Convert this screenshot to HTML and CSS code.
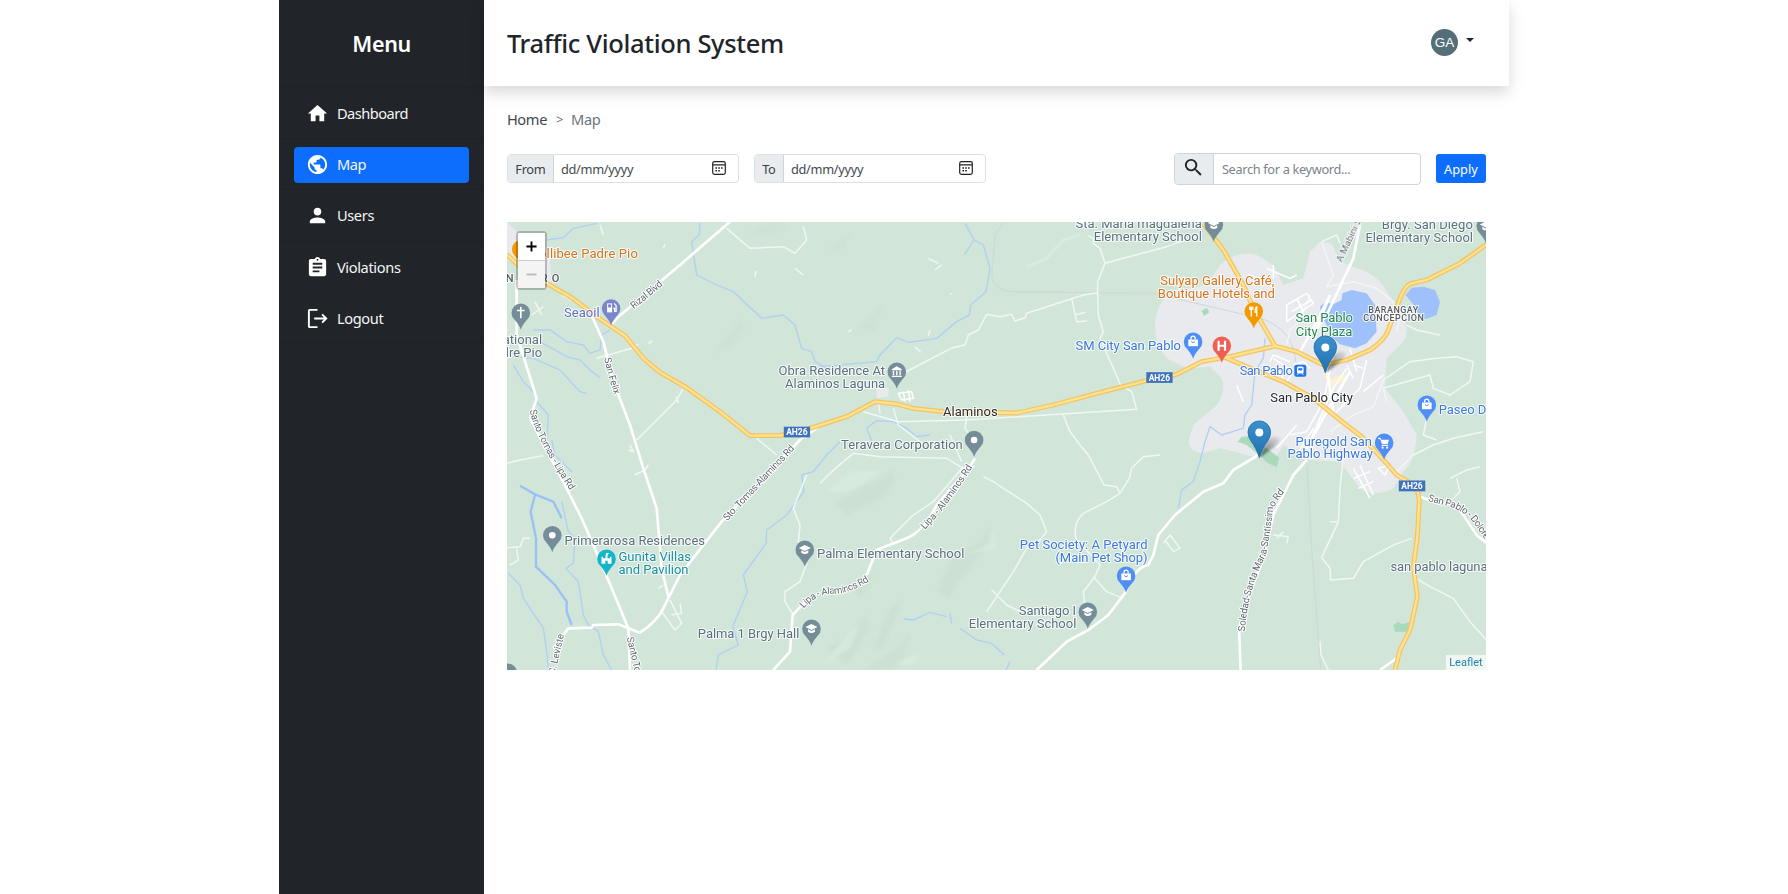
FILE: index.html
```html
<!DOCTYPE html>
<html lang="en">
<head>
<meta charset="utf-8">
<title>Traffic Violation System</title>
<link rel="stylesheet" href="styles.css">
</head>
<body>
<div class="app">
  <aside class="sidebar">
    <h2 class="menu-title">Menu</h2>
    <nav>
      <div class="nav-row"><a class="nav-link"><svg viewBox="0 0 24 24"><path d="M10 20v-6h4v6h5v-8h3L12 3 2 12h3v8z"/></svg><span class="t-dash">Dashboard</span></a></div>
      <div class="nav-row"><a class="nav-link active"><svg viewBox="0 0 24 24"><path d="M12 2C6.480 2 2 6.480 2 12s4.480 10 10 10 10-4.480 10-10S17.520 2 12 2zm-1 17.930c-3.950-.49-7-3.850-7-7.930 0-.62.080-1.210.21-1.790L9 15v1c0 1.100.9 2 2 2v1.930zm6.900-2.540c-.26-.81-1-1.390-1.900-1.390h-1v-3c0-.55-.45-1-1-1H8v-2h2c.55 0 1-.45 1-1V7h2c1.100 0 2-.9 2-2v-.41c2.930 1.190 5 4.060 5 7.410 0 2.080-.8 3.970-2.100 5.390z"/></svg><span>Map</span></a></div>
      <div class="nav-row"><a class="nav-link"><svg viewBox="0 0 24 24"><path d="M12 12c2.210 0 4-1.790 4-4s-1.790-4-4-4-4 1.790-4 4 1.790 4 4 4zm0 2c-2.670 0-8 1.340-8 4v2h16v-2c0-2.660-5.330-4-8-4z"/></svg><span>Users</span></a></div>
      <div class="nav-row"><a class="nav-link"><svg viewBox="0 0 24 24"><path d="M19 3h-4.180C14.400 1.840 13.300 1 12 1s-2.400.84-2.820 2H5c-1.100 0-2 .9-2 2v14c0 1.100.9 2 2 2h14c1.100 0 2-.9 2-2V5c0-1.100-.9-2-2-2zm-7 0c.55 0 1 .45 1 1s-.45 1-1 1-1-.45-1-1 .45-1 1-1zm2 14H7v-2h7v2zm3-4H7v-2h10v2zm0-4H7V7h10v2z"/></svg><span>Violations</span></a></div>
      <div class="nav-row"><a class="nav-link"><svg viewBox="0 0 24 24"><path d="M17.500 7l-1.400 1.400L18.700 11H8.500v2h10.200l-2.600 2.600L17.500 17l5-5zM4 4h8V2H4c-1.100 0-2 .9-2 2v16c0 1.100.9 2 2 2h8v-2H4z"/></svg><span>Logout</span></a></div>
    </nav>
  </aside>
  <main class="content">
    <header class="topbar">
      <h1 class="title">Traffic Violation System</h1>
      <div class="account"><span class="avatar">GA</span><span class="caret"></span></div>
    </header>
    <section class="page">
      <div class="crumbs"><a>Home</a><span class="sep">&gt;</span><span class="current">Map</span></div>
      <div class="filters">
        <div class="group"><span class="addon from">From</span><span class="field"><span>dd/mm/yyyy</span><svg class="cal" viewBox="0 0 14 14"><rect x=".7" y=".7" width="12.600" height="12.600" rx="1.800"/><path d="M1 3.800h12"/><path class="dots" d="M3.400 7h1.600M6.200 7h1.600M9 7h1.600M3.400 9.800h1.600M6.200 9.800h1.600"/></svg></span></div>
        <div class="group"><span class="addon to">To</span><span class="field"><span>dd/mm/yyyy</span><svg class="cal" viewBox="0 0 14 14"><rect x=".7" y=".7" width="12.600" height="12.600" rx="1.800"/><path d="M1 3.800h12"/><path class="dots" d="M3.400 7h1.600M6.200 7h1.600M9 7h1.600M3.400 9.800h1.600M6.200 9.800h1.600"/></svg></span></div>
        <div class="group search"><span class="addon lens"><svg viewBox="0 0 24 24"><path d="M15.500 14h-.79l-.28-.27A6.471 6.471 0 0 0 16 9.500 6.500 6.500 0 1 0 9.500 16c1.610 0 3.090-.59 4.230-1.570l.27.28v.79l5 4.990L20.490 19l-4.990-5zm-6 0C7.010 14 5 11.990 5 9.500S7.010 5 9.500 5 14 7.010 14 9.500 11.990 14 9.500 14z"/></svg></span><span class="field hint">Search for a keyword...</span></div>
        <button class="apply">Apply</button>
      </div>
      <div class="map">
        <svg class="canvas" viewBox="21 21 2937 1344" preserveAspectRatio="none">
          <defs>
            <linearGradient id="mk" x1="0" y1="0" x2="0" y2="1"><stop offset="0" stop-color="#3a92cf"/><stop offset="1" stop-color="#236fae"/></linearGradient>
            <linearGradient id="sh" x1="0" y1="1" x2=".7" y2="0"><stop offset="0" stop-color="#000" stop-opacity=".6"/><stop offset="1" stop-color="#000" stop-opacity=".08"/></linearGradient>
            <filter id="soft" x="-30%" y="-30%" width="160%" height="160%"><feGaussianBlur stdDeviation="1.300"/></filter>
            <filter id="haze" x="-30%" y="-30%" width="160%" height="160%"><feGaussianBlur stdDeviation="5"/></filter>
            <path id="pin" d="M0 0C-1.200-3.600-3-6.500-6.400-10.200A9.300 9.300 0 1 1 6.400-10.200C3-6.500 1.200-3.600 0 0z"/>
            <g id="cap"><path d="M0-21.800l6 3-6 3-6-3z"/><path d="M-3.500-16.500v2.500q3.500 2.500 7 0v-2.500L0-14.800z"/></g>
            <g id="bag"><path d="M-4.800-19.200h9.600v6.700h-9.600z"/><path class="ln" d="M-2.100-19.200v-1.300a2.100 2.100 0 0 1 4.200 0v1.300"/><path d="M-1.900-17.200q1.900 2.600 3.800 0" fill="none" stroke="#4f8ef7"/></g>
            <g id="marker"><path filter="url(#soft)" d="M0 0L8-17Q16-25 21-19Q20-13 0 0z" fill="url(#sh)"/><path d="M0 0C-2-7-5-12-8.500-17Q-11.300-21-11.300-25.500A11.300 11.300 0 0 1 11.300-25.500Q11.300-21 8.500-17C5-12 2-7 0 0z" fill="url(#mk)" stroke="#2269a5" stroke-width=".8"/><circle cy="-25.300" r="4" fill="#fff"/></g>
            <path id="felix" d="M604.500 358.500Q609 380 615 396"/>
            <path id="lipa" d="M530 411Q535 437 571 492"/>
            <path id="sol" d="M1245 632Q1248 590 1266 556Q1271 530 1273 511Q1277 499 1290 487"/>
            <path id="low" d="M804 609Q816 594 834 594Q850 594 870 581"/>
            <path id="dol" d="M1428 501L1453 508Q1468 514 1475 525L1494 552"/>
            <path id="upl" d="M925 530Q948 507 974 465"/>
          </defs>
          <rect x="21" y="21" width="2937" height="1344" fill="#d1e6d9"/>
          <!-- hill shading -->
          <g fill="#c7dccf" opacity=".45" filter="url(#haze)">
            <path d="M1010 860L1090 815 1150 790 1170 765 1185 790 1150 850 1080 880 1040 900zM1060 1120L1120 1070 1110 1110 1080 1150zM1310 1130L1360 1020 1440 980 1470 930 1465 970 1420 1050 1370 1100 1350 1150zM980 1300L1050 1260 1100 1200 1110 1240 1040 1350zM1120 1300L1170 1180 1210 1150 1150 1300zM1090 1365L1200 1290 1230 1250 1210 1330 1180 1365z"/>
            <path d="M645 410L690 350 725 310 735 345 680 400zM750 50L820 20 870 40 800 60zM990 100L1050 55 1030 100zM1080 340L1150 270 1120 350z" opacity=".6"/>
          </g>
          <g fill="#daecdf" opacity=".7" filter="url(#haze)"><path d="M980 830L1050 770 1150 765 1100 800 1040 830zM970 1350L1040 1260 1080 1230 1050 1300zM1180 1350L1260 1310 1240 1350zM1390 1020L1470 990 1480 940 1490 1000z"/></g>
          <path d="M1580 155L1640 130 1690 75 1740 60" fill="none" stroke="#d9ebe0" stroke-width="10"/>
          <!-- built-up areas -->
          <g fill="#e8eaee">
            <path d="M21 21L60 60 90 120 150 130 155 200 80 180 21 130z"/>
            <path transform="translate(1920)" d="M45 330Q50 250 110 225L200 210 240 150Q290 105 350 120L400 150 430 210 490 190 510 110 540 80 575 85 600 140 680 170Q730 200 740 230L790 300Q810 350 790 380L740 430 735 520 790 590 830 660Q825 740 790 770L760 820Q700 850 660 820L600 740 500 735 430 690 400 740 240 700 185 715Q150 710 145 680L160 630 230 570Q260 530 245 490L210 455 140 460 80 430Q45 390 45 330z"/>
            <path d="M1130 520L1165 518 1165 545 1130 550z"/>
          </g>
          <g fill="#9fc1fb">
            <path transform="translate(1920)" d="M540 275L555 262 580 268 605 255 607 235 635 225 680 235 705 270 710 350 680 385 645 400 600 388 575 365 560 330 545 305z"/>
            <path transform="translate(1920)" d="M797 240L815 218 850 215 885 225 900 260 890 300 855 313 835 300 825 275z"/>
          </g>
          <g fill="#a8dabb"><path d="M2105 288L2120 278 2128 292 2112 303zM2213 680L2225 665 2245 664 2268 680 2300 700 2338 728 2330 757 2300 742 2280 722 2240 690zM2680 1230L2695 1220 2705 1228 2728 1222 2722 1250 2685 1250z"/></g>
          <path d="M2468 480L2480 468 2505 510 2500 520zM2480 500L2530 475 2545 492 2500 512z" fill="#fbf0cf"/>
          <g class="river">
            <path d="M140 75L190 68 220 40 290 25M600 25L598 60 575 80 590 180 650 210 700 230 785 310 850 300 885 330 905 400 935 410 945 440 980 460"/>
            <path d="M1395 25L1423 75 1450 90 1470 160 1458 230 1412 270 1408 300 1370 320 1310 370 1225 382 1190 368 1140 420 1130 440 960 455M1422 75L1394 118"/>
            <path d="M100 345L150 345 200 380 250 390 270 415 300 405 305 360 330 345M40 425L100 430 180 465 240 530 260 535M120 380L200 425 240 435 270 465 300 488"/>
            <path d="M40 450L70 500 110 540 110 560 145 600 140 690M155 675L165 720 215 770"/>
            <path d="M1120 690L1100 640 1130 617 1180 620 1220 640 1250 665 1290 660M1020 680L980 720 940 770 905 780 912 830 860 900 800 945 798 985 730 1080 742 1130 698 1235 715 1290 655 1320 648 1365"/>
            <path d="M185 860L205 950 225 970 220 1045 198 1060 235 1100 250 1200 265 1230 295 1250 310 1320 335 1365M25 1075L60 1110 70 1150 130 1240 140 1310 145 1365M2295 370L2290 430 2265 470 2255 570 2235 600 2230 640 2165 660 2130 635 2115 680 2100 740 2080 800 2045 825 2035 880"/>
            <path class="wide" d="M60 812L105 838 160 860 185 910M105 840L92 890 108 970 108 1055 165 1110 200 1160 200 1190 215 1230"/>
            <path d="M1212 1212L1240 1215 1290 1192 1340 1205M1350 1195L1355 1225M1380 1240L1430 1275 1475 1285 1513 1320M1530 1340L1518 1365"/>
          </g>
          <path d="M1510 20L1485 60 1475 190Q1490 230 1540 230L1960 235 2230 298Q2380 320 2387 440M2420 735L2435 1000 2462 1360" fill="none" stroke="#d0d6d6" stroke-width="3"/>
          <!-- lanes -->
          <g class="lane">
            <path d="M680 40L750 100 850 95 885 115 920 75 910 35M300 30L310 60M490 100L495 88M765 185L768 168M95 300L130 275M105 260L125 300M185 240L215 255M290 430L395 400 415 388M410 675L530 555 548 523M528 545L535 565M210 245L240 260M445 385L458 378M885 160L910 180"/>
            <path d="M1200 480L1353 400 1395 390 1405 360 1435 345 1460 298 1500 305 1535 298 1545 318 1575 308 1580 295 1750 240 1793 233M1793 233L1793 200 1815 145 1800 100 1780 85 1780 70 1765 62M1815 145L1870 130 2000 95 2100 60M1715 250L1730 320 1762 318M1725 300L1757 292M1793 235L1795 300 1810 350 1800 370 1862 510 1895 530 1910 583 1400 615 1195 620 1090 590M1245 395L1262 412M1285 130L1315 145M1305 165L1325 150M1350 238L1355 235M1290 345L1285 362M1045 350L1055 345"/>
            <path d="M1135 560L1140 595M1180 580L1195 630 1260 680 1270 690M1400 600L1395 640 1410 660M1690 600L1710 650 1740 690 1765 720 1812 810 1850 815 1860 835 1888 790 1895 760 1930 725 1980 720M1860 835L1820 860 1750 895Q1715 930 1730 975L1800 1050 1785 1085 1750 1130 1755 1180"/>
            <path d="M20 745L60 735 130 722M390 690L400 710 385 705M404 780L435 765 445 750M20 998L60 995 70 970 90 970M50 1000L55 1035 30 1050M475 1120L490 1110M510 1155L545 1225 525 1245 485 1190M540 1165L545 1195 515 1200"/>
            <path d="M960 805L990 775 1030 740 1060 715 1140 725 1340 730 1390 760 1425 755M1390 755L1300 860 1240 900 1170 970 1180 985M1450 785L1480 800 1510 820 1580 865 1620 900 1640 950 1620 975 1580 1000 1540 1070 1460 1190M1475 1125L1520 1170 1560 1190M1350 660L1385 740M1780 1085L1820 1130 1870 1150M920 780L880 880 900 930 895 980 918 1050 900 1100 855 1130 855 1160 880 1200M770 670L830 720"/>
            <path d="M2465 80L2500 180 2480 215 2560 200 2630 220 2680 260 2700 310 2690 350M2465 80L2510 60 2520 85M2720 330L2750 345 2820 360M2360 390L2370 345 2400 315 2430 240M2490 650L2560 600 2620 575 2650 495 2730 440 2810 430 2870 425 2920 440 2910 500 2850 540 2800 520 2790 480 2650 520 2660 560M2780 610L2770 660 2810 675M2530 725L2520 820 2515 920 2465 1028 2490 1060 2492 1095 2560 1090 2590 1040 2680 990 2735 970M2850 790L2900 765 2940 755M2870 790L2880 830 2850 860M2740 1085L2790 1115 2860 1150 2910 1220 2960 1275M2460 1278L2463 1320 2485 1365M2490 920L2510 920M1990 985L2010 960 2040 1000 2020 1010 1995 975M2320 960L2365 965 2360 985M2350 950L2330 970M2690 770L2740 720 2800 690 2860 670 2950 650"/>
          </g>
          <g class="lane block">
            <path d="M2360 270L2420 235 2440 265 2360 320zM2375 290L2435 255M2390 250L2410 290M2300 160L2370 190 2390 180M2320 150L2320 190M2245 180L2280 190"/>
            <path d="M2500 420L2470 560 2420 650 2370 660M2540 460L2500 520 2420 700M2600 435L2580 520 2500 600M2320 430L2380 470 2360 500M2330 460L2350 490M2210 510L2230 560M2390 630L2330 700M2440 640L2390 720M2590 530L2650 480M2550 400L2570 470M2310 440L2320 420 2370 440M2300 470L2360 500M2540 450L2560 490M2560 450L2590 460"/>
            <path d="M2560 760L2610 850M2580 750L2620 840M2560 790L2610 770M2575 820L2620 800M2635 760L2670 750 2655 780zM2430 460L2410 440 2380 450M1195 535L1235 530 1240 550 1205 555zM1210 530L1215 560M1225 525L1230 560"/>
          </g>
          <!-- connecting roads -->
          <g class="road">
            <path d="M690 20L540 150 350 310 334 330M270 290L310 380 340 500 390 630 430 760 470 880 485 1060 505 1145M50 195L50 360 110 550 90 610 200 820 245 910 310 1060 385 1240 390 1365M160 1300L205 1240 275 1238 280 1230 355 1228 420 1253Q470 1220 490 1180L540 1080 665 920 900 675 970 625"/>
            <path d="M820 1365L870 1310 878 1200 925 1150M1100 1080L1130 1005 1220 970Q1270 950 1310 870L1410 755 1425 730M1610 1365L1700 1280 1765 1245 1825 1200 1878 1130Q1900 1060 1945 1050L1960 1020 1975 960 2025 900 2110 830 2170 805 2200 765 2275 720M2420 735L2380 780 2320 900 2290 1030 2240 1160 2217 1240 2222 1365M2640 1365L2690 1330M2490 240L2450 340 2480 300 2560 130 2580 30M2490 240L2440 340 2400 410M2760 845L2800 860 2870 870 2930 960 2960 985"/>
            <path d="M2480 460L2500 590M2550 470L2480 590 2420 700"/>
          </g>
          <g class="hwy">
            <path d="M2110 25L2170 105 2230 210 2260 280 2325 393M2170 425L2240 455 2350 500 2440 550 2520 615 2585 665 2655 740 2690 780 2750 815 2758 855 2752 965 2740 1055 2752 1145 2730 1245 2700 1305 2685 1365"/>
            <path d="M20 118L60 155 140 205 215 248 300 312 375 362 430 430 480 472 560 518 660 590 750 662 840 662 930 640 1040 605 1125 560 1190 567 1240 580 1330 590 1550 594 1660 570 1810 530 1940 497 2030 478 2105 440 2190 425 2325 393 2390 410 2470 450 2540 435 2610 405Q2655 375 2665 345L2700 250Q2715 210 2735 205L2780 195 2880 145 2960 88"/>
          </g>
          <g class="hwy-in">
            <path d="M2110 25L2170 105 2230 210 2260 280 2325 393M2170 425L2240 455 2350 500 2440 550 2520 615 2585 665 2655 740 2690 780 2750 815 2758 855 2752 965 2740 1055 2752 1145 2730 1245 2700 1305 2685 1365"/>
            <path d="M20 118L60 155 140 205 215 248 300 312 375 362 430 430 480 472 560 518 660 590 750 662 840 662 930 640 1040 605 1125 560 1190 567 1240 580 1330 590 1550 594 1660 570 1810 530 1940 497 2030 478 2105 440 2190 425 2325 393 2390 410 2470 450 2540 435 2610 405Q2655 375 2665 345L2700 250Q2715 210 2735 205L2780 195 2880 145 2960 88"/>
          </g>
          <!-- labels and places -->
          <g transform="scale(3) translate(-500.200 -215.300)">
            <g class="street">
              <text transform="translate(634 309.500) rotate(-39.500)" textLength="38">Rizal Blvd</text>
              <text><textPath href="#felix" textLength="38">San Felix</textPath></text>
              <text><textPath href="#lipa" textLength="90">Santo Tomas - Lipa Rd</textPath></text>
              <text transform="translate(727.500 521.500) rotate(-47)" textLength="99">Sto. Tomas-Alaminos Rd</text>
              <text><textPath href="#low" textLength="73">Lipa - Alaminos Rd</textPath></text>
              <text><textPath href="#upl" textLength="79">Lipa - Alaminos Rd</textPath></text>
              <text><textPath href="#sol" textLength="147">Soledad-Santa Maria-Santissimo Rd</textPath></text>
              <text><textPath href="#dol" textLength="77">San Pablo - Dolores</textPath></text>
              <text transform="translate(1342 263) rotate(-65)" textLength="50">A Mabini St</text>
              <text transform="translate(627 638) rotate(77)" textLength="54">Santo Tomas</text>
              <text transform="translate(555 675) rotate(-77)" textLength="41">C. Leviste</text>
            </g>
            <g class="lbl">
              <g fill="#d4731b">
                <text x="532" y="258.700" textLength="106">Jollibee Padre Pio</text>
                <text x="1160.500" y="285.300" textLength="114">Sulyap Gallery Café,</text>
                <text x="1158" y="298.300" textLength="117">Boutique Hotels and</text>
              </g>
              <g fill="#5f6bc4"><text x="564.300" y="317.700" textLength="35.500">Seaoil</text></g>
              <g fill="#5b6f7c">
                <text x="542.300" y="344.300" text-anchor="end">National</text><text x="542.300" y="357.300" text-anchor="end">Padre Pio</text>
                <text x="778.700" y="375" textLength="106.600">Obra Residence At</text><text x="785.300" y="388" textLength="100">Alaminos Laguna</text>
                <text x="841.300" y="449" textLength="121.700">Teravera Corporation</text>
                <text x="1075.700" y="228" textLength="126.300">Sta. Maria magdalena</text><text x="1094" y="241" textLength="108">Elementary School</text>
                <text x="1382" y="229.500" textLength="91">Brgy. San Diego</text><text x="1365.700" y="242.500" textLength="107.500">Elementary School</text>
                <text x="564.700" y="545" textLength="140.500">Primerarosa Residences</text>
                <text x="817.300" y="558.700" textLength="147.200">Palma Elementary School</text>
                <text x="698" y="638" textLength="101.500">Palma 1 Brgy Hall</text>
                <text x="1019" y="615" textLength="57.300">Santiago I</text><text x="969" y="628" textLength="107.500">Elementary School</text>
                <text x="1390.700" y="571" textLength="97">san pablo laguna</text>
              </g>
              <g fill="#168f9e"><text x="618.700" y="561.300" textLength="72.500">Gunita Villas</text><text x="618.700" y="574.300" textLength="70">and Pavilion</text></g>
              <g fill="#3b78d8">
                <text x="1075.700" y="350.500" textLength="105.500">SM City San Pablo</text><text x="1240" y="375.700" textLength="53">San Pablo</text>
                <text x="1439" y="414" textLength="47.500">Paseo D</text>
                <text x="1295.700" y="446" textLength="76.500">Puregold San</text><text x="1287.700" y="458.700" textLength="85.500">Pablo Highway</text>
                <text x="1020" y="549.300" textLength="127.700">Pet Society: A Petyard</text><text x="1055.700" y="562.300" textLength="92">(Main Pet Shop)</text>
              </g>
              <g fill="#25874f"><text x="1295.700" y="322.700" textLength="57.500">San Pablo</text><text x="1296" y="336" textLength="56.500">City Plaza</text></g>
              <g fill="#27292c"><text x="943.300" y="416.700" textLength="54.500">Alaminos</text><text x="1270.500" y="402.700" textLength="82.500">San Pablo City</text></g>
              <g class="area"><text class="town" x="506" y="282">N</text><text class="town" x="541" y="282" textLength="18.500">RO</text><text x="1368.500" y="313.500" textLength="50">BARANGAY</text><text x="1363.500" y="321.700" textLength="60.500">CONCEPCION</text></g>
            </g>
            <g class="shield">
              <rect x="784" y="427" width="26.300" height="10.700"/><text x="797.100" y="435.400">AH26</text>
              <rect x="1146.500" y="372.500" width="26.300" height="10.700"/><text x="1159.600" y="380.900">AH26</text>
              <rect x="1399" y="480.800" width="26.500" height="10.800"/><text x="1412.200" y="489.300">AH26</text>
            </g>
            <g class="pins">
              <g transform="translate(521 330)"><use href="#pin" fill="#758d98"/><path d="M-.8-23h1.600v3h3v1.500h-3v7h-1.600v-7h-3v-1.500h3z"/></g>
              <g transform="translate(521.500 266.500)"><use href="#pin" fill="#f29900"/></g>
              <g transform="translate(611.300 325.700)"><use href="#pin" fill="#7986cb"/><path d="M-4-22h5v9h-5z"/><path class="ln" d="M2-17h1.500v3h1.500v-6l-2-2"/><path d="M-3-21h3v3h-3z" fill="#7986cb"/></g>
              <g transform="translate(897 389)"><use href="#pin" fill="#758d98"/><path d="M0-22.500l5 3v1H-5v-1zM-5-13H5v1.200H-5zM-4-18h1.400v4.500H-4zM-.7-18H.7v4.500H-.7zM2.600-18H4v4.500H2.600z"/></g>
              <g transform="translate(974.300 457.300)"><use href="#pin" fill="#758d98"/><circle cy="-17" r="3.300"/></g>
              <g transform="translate(552.500 552.500)"><use href="#pin" fill="#758d98"/><circle cy="-17" r="3.300"/></g>
              <g transform="translate(508 690)"><use href="#pin" fill="#758d98"/></g>
              <g transform="translate(606.700 576)"><use href="#pin" fill="#12b5cb"/><path d="M-5-19h1.500v1.500H-1v-2.500L0-23l3 .8-2 1.200v3.500h2.500V-19H5v7H1.200v-3h-2.400v3H-5z"/></g>
              <g transform="translate(1214 242)"><use href="#pin" fill="#758d98"/><use href="#cap"/></g>
              <g transform="translate(1486 243.500)"><use href="#pin" fill="#758d98"/><use href="#cap"/></g>
              <g transform="translate(805 567)"><use href="#pin" fill="#758d98"/><use href="#cap"/></g>
              <g transform="translate(811.700 646)"><use href="#pin" fill="#758d98"/><use href="#cap"/></g>
              <g transform="translate(1088 629)"><use href="#pin" fill="#758d98"/><use href="#cap"/></g>
              <g transform="translate(1254 328.700)"><use href="#pin" fill="#f29900"/><path class="ln" d="M-4-22v3h3v-3M-2.500-22v10M3-12v-9.500q-2 1-1.500 5.500h1.500"/></g>
              <g transform="translate(1222 363)"><use href="#pin" fill="#ee6055"/><path d="M-4.300-22h2.200v4h4.200v-4h2.200v10H2.100v-4h-4.200v4h-2.200z"/></g>
              <g transform="translate(1193.300 359)"><use href="#pin" fill="#4f8ef7"/><use href="#bag"/></g>
              <g transform="translate(1427 422)"><use href="#pin" fill="#4f8ef7"/><use href="#bag"/></g>
              <g transform="translate(1126.300 593)"><use href="#pin" fill="#4f8ef7"/><use href="#bag"/></g>
              <g transform="translate(1384.300 460)"><use href="#pin" fill="#4f8ef7"/><path d="M-3.500-20H5l-1.600 4.500h-5.500zM-6-22h2.400l.8 2h-1.500l-.3-.8H-6zM-2.500-14.800h6.500v1.100h-6.500z"/><circle cx="-1.500" cy="-12" r="1.100"/><circle cx="3" cy="-12" r="1.100"/></g>
              <g><rect x="1294.500" y="365" width="12" height="12" rx="2" fill="#1f74e8"/><rect x="1297.200" y="366.800" width="6.600" height="7" rx="1.500"/><path d="M1298.500 368.500h4v2.200h-4z" fill="#1f74e8"/><path class="ln thin" d="M1298.700 373.300l-1.200 2M1302.300 373.300l1.200 2"/></g>
            </g>
            <use href="#marker" transform="translate(1325.500 373)"/>
            <use href="#marker" transform="translate(1259.500 458)"/>
          </g>
        </svg>
        <div class="zoom"><span class="zin"><svg viewBox="0 0 12 12"><path d="M6 .5v11M.5 6h11"/></svg></span><span class="zout"><svg viewBox="0 0 12 12"><path d="M.5 6h11"/></svg></span></div>
        <div class="attribution">Leaflet</div>
      </div>
    </section>
  </main>
</div>
</body>
</html>
```
FILE: styles.css
```css
* { box-sizing: border-box; }
body { margin: 0; background: #fff; color: #212529; font-family: "Noto Sans", "Open Sans", sans-serif; overflow: hidden; }
.app { display: flex; width: 1229.500px; height: 894px; margin-left: 279.400px; }
.sidebar { width: 204.500px; background: #212529; color: #fff; flex: none; }
.menu-title { margin: 0; height: 88px; display: flex; align-items: center; justify-content: center; font-size: 21.500px; font-weight: 600; letter-spacing: -.3px; border-bottom: 1px solid #1e2226; }
.nav-row { height: 51.200px; padding: 7.500px 15px; border-bottom: 1px solid #1e2226; }
.nav-link { height: 36px; display: flex; align-items: center; gap: 7.500px; padding-left: 12px; border-radius: 4px; font-size: 14.600px; letter-spacing: -.35px; color: #f4f5f6; }
.nav-link span { position: relative; top: -.5px; }
.nav-link .t-dash { letter-spacing: -.5px; }
.nav-link svg { width: 23px; height: 23px; fill: #fff; }
.active { background: #0d6efd; }
.content { flex: 1; display: flex; flex-direction: column; min-width: 0; }
.topbar { height: 85.700px; flex: none; display: flex; align-items: center; justify-content: space-between; padding: 0 35px 0 23px; box-shadow: 0 7.300px 14.600px rgba(0,0,0,.15); background: #fff; }
.title { margin: 0; font-size: 25.500px; font-weight: 500; white-space: nowrap; letter-spacing: -.34px; }
.account { display: flex; align-items: center; gap: 8px; }
.avatar { width: 27px; height: 27px; border-radius: 50%; background: #546e7a; color: #fff; display: grid; place-items: center; font: 13.500px "Liberation Sans", sans-serif; }
.caret { border: 4.400px solid transparent; border-top-color: #212529; border-bottom: 0; margin-bottom: 5px; }
.page { padding: 22.300px 23px 0; }
.crumbs { display: flex; align-items: center; height: 22px; font-size: 14.600px; letter-spacing: -.35px; color: #6c757d; }
.crumbs a { color: #40464c; }
.sep { margin: 0 8px 0 9px; font-size: 13px; }
.filters { display: flex; align-items: center; gap: 15px; height: 32px; margin-top: 22.700px; font-size: 12.800px; }
.group { width: 232px; height: 29px; display: flex; border: 1px solid #dbe0e5; border-radius: 4px; overflow: hidden; flex: none; }
.addon { display: grid; place-items: center; background: #e9ecef; border-right: 1px solid #ced4da; letter-spacing: -.3px; color: #3a4046; }
.from { width: 46px; }
.to { width: 29px; }
.field { flex: 1; display: flex; align-items: center; justify-content: space-between; padding: 0 12px 0 7px; letter-spacing: -.3px; color: #43494f; }
.cal { width: 14px; height: 14px; fill: none; stroke: #222; stroke-width: 1.200; margin-top: -1px; }
.cal .dots { stroke-width: 1.500; }
.search { width: 247px; height: 32px; margin-left: auto; border-color: #ced4da; }
.lens { width: 39px; }
.lens svg { width: 23px; height: 23px; fill: #212529; margin-top: -2px; }
.hint { color: #7b838a; padding-left: 8px; letter-spacing: -.35px; }
.apply { width: 50px; height: 29px; padding: 0; border: 0; border-radius: 3px; background: #0d6efd; color: #fff; font: 12.800px "Noto Sans", sans-serif; }
.map { position: relative; height: 448px; margin-top: 37px; overflow: hidden; }
.canvas { display: block; width: 100%; height: 100%; font-family: Roboto, sans-serif; }
.ln { fill: none; stroke: #fff; stroke-width: 1.300; }
.thin { stroke-width: .8; }
.river path { fill: none; stroke: #b0cff2; stroke-width: 4; }
.river .wide { stroke: #9ac1f6; stroke-width: 7; }
.lane path { fill: none; stroke: #f1f7f4; stroke-width: 4.500; stroke-linejoin: round; }
.block path { stroke: #fff; }
.road path { fill: none; stroke: #fff; stroke-width: 8; stroke-linejoin: round; }
.hwy path { fill: none; stroke: #f4c35e; stroke-width: 14.500; stroke-linejoin: round; }
.hwy-in path { fill: none; stroke: #fde293; stroke-width: 7; stroke-linejoin: round; }
.lbl text { font-size: 13px; stroke: #fff; stroke-opacity: .85; stroke-width: 2px; paint-order: stroke; stroke-linejoin: round; }
.lbl .area text { font-size: 9px; font-weight: 500; fill: #555b61; }
.lbl .area .town { font-size: 11px; }
.street text { font-size: 9.800px; fill: #5d666d; stroke: #fff; stroke-width: 2px; paint-order: stroke; stroke-linejoin: round; }
.shield rect { fill: #3f72bd; }
.shield text { fill: #fff; font-size: 8.500px; font-weight: 700; text-anchor: middle; }
.pins { fill: #fff; }
.zoom { position: absolute; left: 9.500px; top: 9.500px; width: 31px; height: 59px; border: 2px solid rgba(0,0,0,.22); border-radius: 4px; background-clip: padding-box; display: flex; flex-direction: column; }
.zoom span { flex: 1; display: grid; place-items: center; }
.zoom svg { width: 11px; height: 11px; stroke: #000; stroke-width: 2; }
.zin { background: #fff; border-bottom: 1px solid #ccc; }
.zout { background: #f4f4f4; }
.zoom .zout svg { stroke: #bbb; }
.attribution { position: absolute; right: 0; bottom: 0; width: 40px; height: 15px; background: rgba(255,255,255,.7); color: #1f83ad; font: 11px/15px Roboto, sans-serif; text-align: center; }
```
